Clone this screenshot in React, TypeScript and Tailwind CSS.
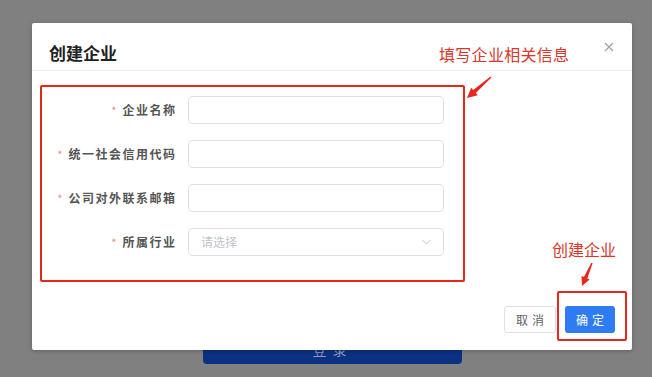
import React from "react";

const font = { fontFamily: '"Noto Sans CJK SC", "Noto Sans", sans-serif' };

function Row({ label, children }: { label: string; children: React.ReactNode }) {
  return (
    <div className="flex items-center h-[28px]">
      <div className="w-[143px] flex justify-end items-center">
        <span className="text-[#f08a8a] text-[11px] mr-[6px] leading-none">*</span>
        <span className="text-[12px] font-bold text-[#555] tracking-[1.5px] leading-none mr-[-1.5px]">{label}</span>
      </div>
      <div className="ml-[13px] w-[256px] h-[28px]">{children}</div>
    </div>
  );
}

function Input() {
  return <div className="w-full h-full border border-[#dcdfe6] rounded-[4px] bg-white" />;
}

export default function App() {
  return (
    <div className="relative w-[652px] h-[377px] overflow-hidden bg-[#808080]" style={font}>
      {/* background page */}
      <div className="flex flex-col pt-[320px] pl-[203px]">
        <div className="w-[259px] h-[44px] rounded-[4px] bg-[#0b3182] flex items-end justify-center pb-[5px]">
          <span className="text-[14px] leading-[20px] text-[#8e9cc0] tracking-[6px]">登录</span>
        </div>
      </div>

      {/* dialog */}
      <div className="absolute left-[32px] top-[23px] w-[600px] h-[327px] bg-white rounded-[2px] shadow-[0_1px_4px_rgba(0,0,0,0.25)] flex flex-col">
        <div className="h-[48px] border-b border-[#ececec] pl-[17px] pt-[18px] flex justify-between">
          <span className="text-[17px] leading-[24px] font-bold text-[#222]">创建企业</span>
          <svg width="10" height="10" viewBox="0 0 10 10" className="mr-[18px] mt-[1px]">
            <path d="M1 1 L9 9 M9 1 L1 9" stroke="#a0a0a0" strokeWidth="1.1" />
          </svg>
        </div>
        <div className="flex flex-col gap-[16px] pt-[25px]">
          <Row label="企业名称"><Input /></Row>
          <Row label="统一社会信用代码"><Input /></Row>
          <Row label="公司对外联系邮箱"><Input /></Row>
          <Row label="所属行业">
            <div className="w-full h-full border border-[#dcdfe6] rounded-[4px] bg-white flex items-center justify-between pl-[12px] pr-[12px]">
              <span className="text-[12px] text-[#c0c4cc]">请选择</span>
              <svg width="9" height="6" viewBox="0 0 9 6">
                <path d="M0.5 1 L4.5 5 L8.5 1" fill="none" stroke="#c0c4cc" strokeWidth="1" />
              </svg>
            </div>
          </Row>
        </div>
        <div className="flex justify-end gap-[9px] pr-[17px] mt-[50px]">
          <div className="w-[52px] h-[27px] border border-[#dcdfe6] rounded-[3px] flex items-center justify-center text-[12px] text-[#606266] tracking-[4px] pl-[4px]">取消</div>
          <div className="w-[50px] h-[27px] rounded-[3px] bg-[#2f7cf2] flex items-center justify-center text-[12px] text-white tracking-[4px] pl-[4px]">确定</div>
        </div>
      </div>

      {/* annotations */}
      <div className="absolute left-[40px] top-[85px] w-[425px] h-[197px] border-2 border-[#e8261c] rounded-[2px]" />
      <div className="absolute left-[557px] top-[291px] w-[70px] h-[50px] border-2 border-[#e8261c] rounded-[2px]" />
      <div className="absolute left-[439px] top-[43px] text-[16px] leading-[22px] text-[#d9372c] tracking-[0.3px]">填写企业相关信息</div>
      <div className="absolute left-[552px] top-[238px] text-[16px] leading-[22px] text-[#d9372c]">创建企业</div>
      <svg className="absolute left-0 top-0" width="652" height="377" viewBox="0 0 652 377">
        <polygon points="490.6,76.5 473.2,89.9 471.2,87.7 467,98 477.8,95.2 475.8,92.9 491.4,77.5" fill="#e8261c" />
        <polygon points="591.4,262.8 583.9,277 581.5,275.9 582,286 589.7,279.5 587.3,278.4 592.6,263.2" fill="#e8261c" />
      </svg>
    </div>
  );
}
